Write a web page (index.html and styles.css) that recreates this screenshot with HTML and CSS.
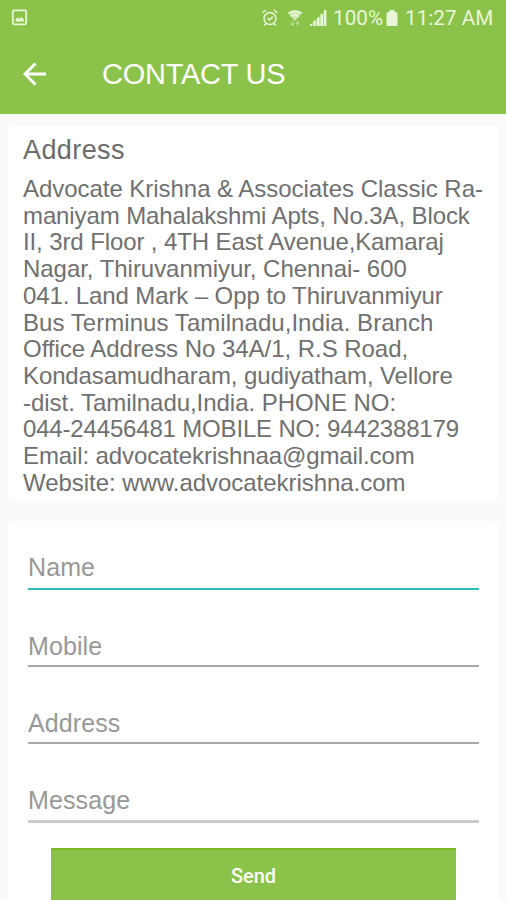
FILE: index.html
```html
<!DOCTYPE html>
<html lang="en">
<head>
<meta charset="utf-8">
<title>Contact us</title>
<link rel="stylesheet" href="styles.css">
</head>
<body>
<header class="top">
  <div class="status">
    <svg class="shot" viewBox="0 0 18 18" width="18" height="18"><rect x="1.800" y="1.300" width="13.400" height="14" rx="1.500" fill="none" stroke="currentColor" stroke-width="1.800"/><path d="M4.500 12.500v-2l2-2 2 1.500 1.500-2 3 2.500v2z" fill="currentColor"/></svg>
    <div class="indicators">
      <svg class="alarm" viewBox="0 0 18 20" width="18" height="20"><g fill="none" stroke="currentColor" stroke-width="1.500"><circle cx="9" cy="10.500" r="6"/><path d="M1.500 5 5 2M13 2l3.500 3M6.500 10l2 2 3.500-3.500M5 15.500l-1.700 2M13 15.500l1.700 2"/></g></svg>
      <svg class="wifi" viewBox="0 0 16 18" width="16" height="18"><path d="M.8 3.500Q8-1.200 15.200 3.500L8 12z" fill="currentColor" opacity=".75"/><path d="M1.500 4.500Q8 0 14.500 4.500M4 7.500q4-3 8 0" fill="none" stroke="currentColor" stroke-width="1.300"/><path d="M5.500 12v4M4 14.500l1.500 2 1.500-2M10.500 17v-4M9 14.500l1.500-2 1.500 2" fill="none" stroke="currentColor" opacity=".6"/></svg>
      <svg class="signal" viewBox="0 0 18 18" width="18" height="18"><path d="M0 17 17.300 1v16z" fill="currentColor" opacity=".35"/><path d="M1 17v-2h2v2zM4.500 17v-5.500h2.200V17zM8 17V8.500h2.500V17zM11.500 17V5H14v12zM15 17V1h2.300v16z" fill="currentColor"/></svg>
      <span class="percent">100%</span>
      <svg class="battery" viewBox="0 0 12 18" width="12" height="18"><path d="M3.500 1h5v2H10q1.500 0 1.500 1.500v11Q11.500 17 10 17H2Q.5 17 .5 15.500v-11Q.5 3 2 3h1.500z" fill="currentColor"/></svg>
      <span class="clock">11:27 AM</span>
    </div>
  </div>
  <div class="bar">
    <svg class="back" viewBox="0 0 24 24" width="24" height="24"><path d="M23 12H2M12.500 1.500 2 12l10.500 10.500" fill="none" stroke="currentColor" stroke-width="2.900"/></svg>
    <h1>CONTACT US</h1>
  </div>
</header>
<main>
  <section class="card info">
    <h2>Address</h2>
    <p>
      <span>Advocate Krishna &amp; Associates Classic Ra-</span>
      <span class="snug">maniyam Mahalakshmi Apts, No.3A, Block</span>
      <span class="snug">II, 3rd Floor , 4TH East Avenue,Kamaraj</span>
      <span>Nagar, Thiruvanmiyur, Chennai- 600</span>
      <span class="snug">041. Land Mark – Opp to Thiruvanmiyur</span>
      <span class="loose">Bus Terminus Tamilnadu,India. Branch</span>
      <span>Office Address No 34A/1, R.S Road,</span>
      <span class="snug">Kondasamudharam, gudiyatham, Vellore</span>
      <span>-dist. Tamilnadu,India. PHONE NO:</span>
      <span class="tight">044-24456481 MOBILE NO: 9442388179</span>
      <span class="snug">Email: advocatekrishnaa@gmail.com</span>
      <span>Website: www.advocatekrishna.com</span>
    </p>
  </section>
  <form class="card form">
    <input class="focus" type="text" placeholder="Name" aria-label="Name">
    <input type="text" placeholder="Mobile" aria-label="Mobile">
    <input type="text" placeholder="Address" aria-label="Address">
    <input class="last" type="text" placeholder="Message" aria-label="Message">
    <button type="button">Send</button>
  </form>
</main>
</body>
</html>
```
FILE: styles.css
```css
* { box-sizing: border-box; }
body {
  margin: 0;
  height: 900px;
  overflow: hidden;
  background: #fafafa;
  font-family: "Liberation Sans", Arial, sans-serif;
}
.top { height: 114px; background: #8bc34a; color: #fff; }
.status {
  height: 36px;
  padding: 0 12px 0 11px;
  display: flex;
  align-items: center;
  justify-content: space-between;
  color: #e9f6d8;
  font: 20.700px/38px Roboto, sans-serif;
}
.indicators { display: flex; align-items: center; }
.alarm { margin-right: 8px; }
.wifi { margin-right: 6px; }
.signal { margin-right: 6px; }
.percent { width: 51px; }
.battery { margin: 0 7px 0 2px; }
.clock { width: 89px; white-space: nowrap; }
.bar { height: 76px; padding-left: 23px; display: flex; align-items: center; }
.bar h1 { margin: 0 0 0 55px; font-size: 29px; font-weight: 400; line-height: 74px; letter-spacing: -.25px; }
main { padding: 12px 7px 0 8px; }
.card { background: #fff; border-radius: 3px; }
.info { height: 373px; padding: 8px 0 0 15px; }
.info h2 { margin: 0; color: #6c6c6c; font-size: 27px; font-weight: 400; line-height: 32px; letter-spacing: .4px; }
.info p { margin: 10px 0 0; color: #707070; font-size: 24px; line-height: 26.700px; letter-spacing: -.04px; white-space: nowrap; }
.info span { display: block; }
.info .snug { letter-spacing: -.11px; }
.info .tight { letter-spacing: -.17px; }
.info .loose { letter-spacing: .05px; }
.form { height: 400px; margin-top: 22px; padding: 26px 20px 0; display: flex; flex-direction: column; border-radius: 6px; }
input {
  width: 100%;
  height: 43px;
  flex: none;
  margin: 0 0 34px;
  padding: 3px 0 0;
  border: 0;
  border-bottom: 2px solid #a8a8a8;
  border-radius: 0;
  background: none;
  outline: 0;
  color: #666;
  font: 25px "Liberation Sans", Arial, sans-serif;
  letter-spacing: .1px;
}
input::placeholder { color: #989898; opacity: 1; }
.focus { padding: 0 0 1px; border-bottom-color: #2abfb3; }
.last { height: 45px; border-bottom: 3px solid #cbcbcb; margin-bottom: 25px; }
button {
  height: 56px;
  flex: none;
  margin: 0 23px;
  padding: 0 0 2px;
  border: 0;
  border-top: 2px solid #7db928;
  background: #8bc34a;
  color: #fff;
  font: 500 20px Roboto, sans-serif;
}
```
